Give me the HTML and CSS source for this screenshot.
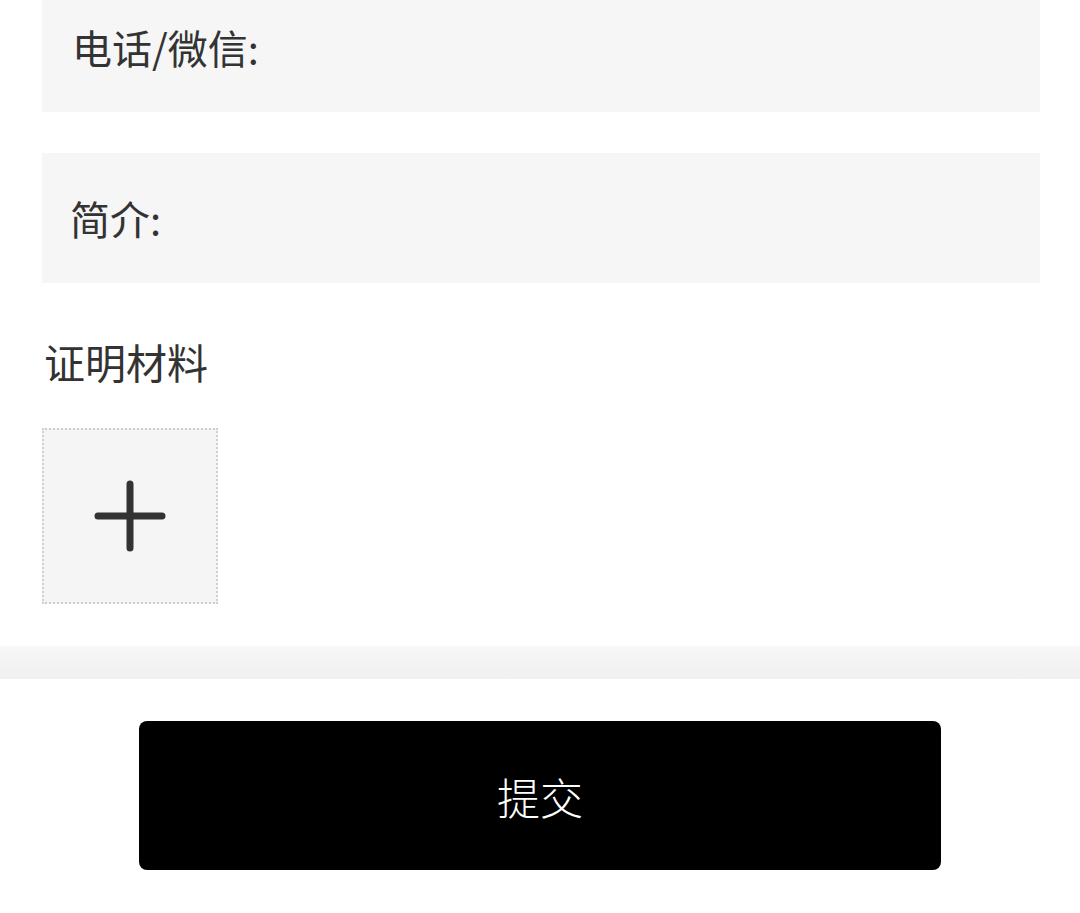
FILE: index.html
```html
<!DOCTYPE html>
<html lang="zh-CN">

<head>
    <meta charset="UTF-8">
    <meta name="viewport" content="width=device-width, initial-scale=1.0">
    <title>提交资料</title>
    <link rel="stylesheet" href="styles.css">
</head>

<body>
    <div class="form">
        <div class="field field--first">
            <span class="field__label">电话/微信:</span>
        </div>
        <div class="field">
            <span class="field__label">简介:</span>
        </div>

        <div class="section__title">证明材料</div>
        <div class="upload">
            <svg class="upload__icon" width="72" height="72" viewBox="0 0 72 72">
                <path d="M36 4 V68 M4 36 H68" stroke="#333" stroke-width="7" stroke-linecap="round" fill="none" />
            </svg>
        </div>
    </div>

    <div class="divider"></div>

    <div class="footer">
        <button class="submit">提交</button>
    </div>
</body>

</html>
```

FILE: styles.css
```css
* {
    box-sizing: border-box;
}

body {
    margin: 0;
    padding: 0;
    background-color: #fff;
    font-family: "Noto Sans CJK SC", "Noto Sans", sans-serif;
    color: #333;
    overflow: hidden;
}

.form {
    display: flex;
    flex-direction: column;
    padding: 0 40px 0 42px;
}

.field {
    display: flex;
    align-items: center;
    height: 130px;
    padding-left: 28px;
    background-color: #f6f6f6;
    margin-top: 41px;
}

.field--first {
    margin-top: -18px;
    padding-left: 30px;
}

.field__label {
    font-size: 40px;
    line-height: 40px;
}

.section__title {
    margin-top: 58px;
    font-size: 41px;
    line-height: 41px;
    padding-left: 2px;
}

.upload {
    margin-top: 46px;
    width: 176px;
    height: 176px;
    display: flex;
    align-items: center;
    justify-content: center;
    background-color: #f5f5f5;
    border: 2px dotted #cfcfcf;
}

.divider {
    margin-top: 42px;
    height: 33px;
    background: linear-gradient(#f7f7f7, #f0f0f0);
}

.footer {
    display: flex;
    justify-content: center;
    padding-top: 42px;
}

.submit {
    width: 802px;
    height: 149px;
    border: none;
    border-radius: 8px;
    background-color: #000;
    color: #fff;
    font-family: "Noto Sans CJK SC", "Noto Sans", sans-serif;
    font-size: 43px;
    font-weight: 300;
}
```
